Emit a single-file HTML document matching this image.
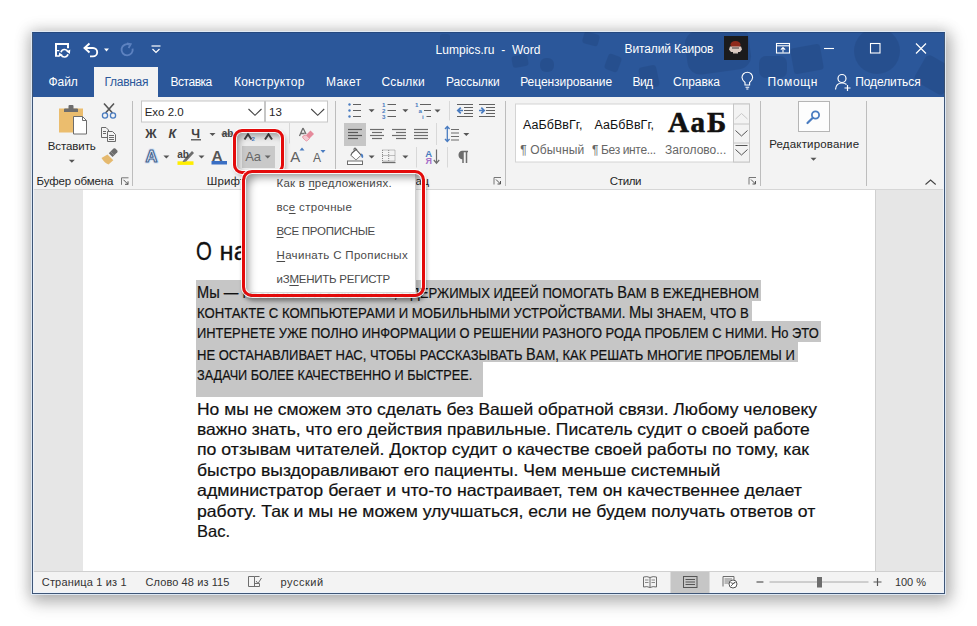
<!DOCTYPE html><html><head><meta charset="utf-8"><style>
*{margin:0;padding:0;box-sizing:border-box}
html,body{width:977px;height:626px;overflow:hidden;background:#fff;font-family:"Liberation Sans",sans-serif}
.t{position:absolute;white-space:pre}
.a{position:absolute}
svg.o{position:absolute;left:0;top:0;width:977px;height:626px;overflow:visible}
</style></head><body>
<div class="a" style="left:32px;top:32px;width:913px;height:562px;box-shadow:0 0 0 1px rgba(225,236,248,0.9),0 1px 14px 3px rgba(0,0,0,0.17),3px 6px 16px 3px rgba(0,0,0,0.22)"></div><div class="a" style="left:32px;top:32px;width:913px;height:562px;background:#2b579a;border:1px solid #3f5677;border-top-color:#24487f"></div><div class="a" style="left:32px;top:32px;width:913px;height:65px;overflow:hidden"><svg class="o" style="left:-32px;top:-32px" viewBox="0 0 977 626"><g fill="#000820" opacity="0.09"><circle cx="877" cy="51" r="23"/><rect x="686" y="28" width="64" height="44" rx="13" transform="rotate(-8 718 50)"/><rect x="759" y="56" width="28" height="22" rx="7"/><rect x="792" y="46" width="30" height="26" rx="3" transform="rotate(-10 807 59)"/><rect x="918" y="60" width="34" height="30" rx="5" transform="rotate(30 935 75)"/><rect x="583" y="33" width="16" height="12" rx="3" transform="rotate(15 591 39)"/><rect x="512" y="55" width="16" height="12" rx="3" transform="rotate(-10 520 61)"/><rect x="540" y="58" width="14" height="14" rx="6"/><rect x="606" y="55" width="14" height="16" rx="3" transform="rotate(20 613 63)"/><rect x="640" y="66" width="18" height="22" rx="4" transform="rotate(-12 649 77)"/><rect x="440" y="34" width="10" height="12" rx="3"/></g><path d="M56 56.8 V44 H68 V48.3" fill="none" stroke="#ffffff" stroke-width="2"/><path d="M57 50.6 H59.3 M57 56 H59" stroke="#ffffff" stroke-width="1.4"/><path d="M61 52.2 A3.7 3.7 0 0 1 67.9 51.6 M68 54.3 A3.7 3.7 0 0 1 61.1 54.9" fill="none" stroke="#ffffff" stroke-width="1.7"/><path d="M66.3 51.6 L70.3 49.6 L69.9 54 Z M62.7 54.9 L58.7 56.9 L59.1 52.5 Z" fill="#ffffff"/><path d="M86 48 H93 A4.2 4.2 0 0 1 93 56.4 H90" fill="none" stroke="#ffffff" stroke-width="1.9"/><path d="M89.5 43.5 L84.5 48 L89.5 52.5" fill="none" stroke="#ffffff" stroke-width="1.9"/><path d="M104 48.5 H109 L106.5 51.5 Z" fill="#ffffff"/><path d="M129.3 44.6 A5.6 5.6 0 1 0 132.6 48.6" fill="none" stroke="#5d82c0" stroke-width="1.9"/><path d="M126.8 43.3 L130.8 44.2 L128.6 48" fill="none" stroke="#5d82c0" stroke-width="1.7"/><path d="M151.5 46 H160.5" stroke="#ffffff" stroke-width="1.2"/><path d="M152.5 49 L156 52.5 L159.5 49" fill="none" stroke="#ffffff" stroke-width="1.2"/><rect x="724" y="36" width="24" height="24" fill="#1b1b1c"/><ellipse cx="735.5" cy="44.5" rx="5" ry="3.6" fill="#8f2a1c"/><path d="M730 46.5 H741 L742 49.5 L740 52 H731 L729 49.5 Z" fill="#dccbc2"/><path d="M732 48 H739" stroke="#5a5050" stroke-width="1.2"/><path d="M733 52 H738 V53.5 H733 Z" fill="#cfc2ba"/><g fill="none" stroke="#ffffff" stroke-width="1.1"><rect x="776.5" y="43.5" width="13" height="9.5"/><path d="M776.5 45.8 H789.5"/><path d="M783 52.5 V47.5 M780.8 49.7 L783 47.5 L785.2 49.7"/></g><path d="M824 48.5 H834" stroke="#ffffff" stroke-width="1.1"/><rect x="870.5" y="43.5" width="9.5" height="9.5" fill="none" stroke="#ffffff" stroke-width="1.1"/><path d="M916 43.5 L926 53.5 M926 43.5 L916 53.5" stroke="#ffffff" stroke-width="1.2"/><g fill="none" stroke="#ffffff" stroke-width="1.1"><path d="M745 85 V82.5 Q742 80 742 77.5 A5.3 5.3 0 0 1 752.6 77.5 Q752.6 80 749.6 82.5 V85 Z"/><path d="M745.5 87.2 H749.2 M746.3 89 H748.4"/></g><g fill="none" stroke="#ffffff" stroke-width="1.2"><circle cx="842" cy="78.5" r="4"/><path d="M835.5 89.5 Q836 83 842 83 Q845 83 846.5 84.5"/><path d="M847.5 85 V91 M844.5 88 H850.5"/></g></svg></div><div class="a" style="left:33px;top:97px;width:911px;height:93px;background:#f3f3f3;border-bottom:1px solid #d6d6d6"></div><div class="a" style="left:94px;top:67px;width:64px;height:31px;background:#f3f3f3;"></div><div class="a" style="left:33px;top:190px;width:911px;height:381px;background:#e6e6e6;"></div><div class="a" style="left:83px;top:190px;width:793px;height:381px;background:#fff;border-right:1px solid #d0d0d0"></div><div class="a" style="left:33px;top:571px;width:911px;height:22px;background:#f3f3f3;border-top:1px solid #d0d0d0"></div><div class="a" style="left:33px;top:97px;width:911px;height:496px;border:1px solid rgba(236,243,252,0.9);border-top:none"></div><svg class="o" viewBox="0 0 977 626"><rect x="59" y="108.5" width="24" height="24" fill="#ebbd6e"/><path d="M64 112 V109.5 Q64 108.5 65 108.5 H68.5 V106 Q68.5 105 69.5 105 H72.5 Q73.5 105 73.5 106 V108.5 H77 Q78 108.5 78 109.5 V112 Z" fill="#6d6d6d"/><path d="M73.5 116.5 H82.5 L86.5 120.5 V134 H73.5 Z" fill="#fff" stroke="#6d6d6d" stroke-width="1"/><path d="M82.5 116.5 V120.5 H86.5" fill="none" stroke="#6d6d6d" stroke-width="1"/><path d="M104 103.5 L112.5 113 M114 103.5 L105.5 113" stroke="#555" stroke-width="1.6"/><circle cx="105" cy="115.5" r="2.6" fill="none" stroke="#4a7cc0" stroke-width="1.3"/><circle cx="113" cy="115.5" r="2.6" fill="none" stroke="#4a7cc0" stroke-width="1.3"/><path d="M101.5 127.5 H106 L108.5 130 V137.5 H101.5 Z" fill="#f3f3f3" stroke="#6a6a6a" stroke-width="1"/><path d="M103 131.5 H106 M103 133.5 H106" stroke="#6a6a6a" stroke-width="1"/><path d="M107.5 131.5 H112.5 L115.5 134.5 V141.5 H107.5 Z" fill="#f3f3f3" stroke="#6a6a6a" stroke-width="1"/><path d="M109 135.5 H114 M109 137.5 H114 M109 139.5 H114" stroke="#6a6a6a" stroke-width="1"/><path d="M110.5 151.5 L113.5 148.5 Q114.5 147.8 115.3 148.6 L117.3 150.6 Q118 151.4 117.3 152.2 L114.3 155.2 Z" fill="#6d6d6d"/><path d="M108.8 153.2 L110.5 151.5 L114.3 155.2 L112.6 157 Z" fill="#6d6d6d"/><path d="M107.5 154.5 L113.3 160.3 L108.5 164.5 Q104.5 163 101.5 158 Z" fill="#e5b96e"/><path d="M132.5 101 V186" stroke="#bdbdbd" stroke-width="1"/><path d="M335.5 101 V186" stroke="#bdbdbd" stroke-width="1"/><path d="M505.5 101 V186" stroke="#bdbdbd" stroke-width="1"/><path d="M760.5 101 V186" stroke="#bdbdbd" stroke-width="1"/><path d="M866.5 101 V186" stroke="#bdbdbd" stroke-width="1"/><path d="M289.5 123 V143.5" stroke="#d8d8d8" stroke-width="1"/><path d="M416.5 147 V167.5" stroke="#d8d8d8" stroke-width="1"/><path d="M436.5 123 V145" stroke="#d8d8d8" stroke-width="1"/><path d="M447.5 147 V167.5" stroke="#d8d8d8" stroke-width="1"/><path d="M449.5 101 V120.5" stroke="#d8d8d8" stroke-width="1"/><rect x="141.5" y="101" width="123" height="21" fill="#fff" stroke="#c6c6c6"/><rect x="265.5" y="101" width="62" height="21" fill="#fff" stroke="#c6c6c6"/><path d="M248.5 109 L255 115.3 L261.5 109" fill="none" stroke="#444" stroke-width="1.1"/><path d="M311.2 109 L317.7 115.3 L324.2 109" fill="none" stroke="#444" stroke-width="1.1"/><path d="M68.8 159.8 H74.8 L71.8 162.8 Z" fill="#555"/><path d="M209.5 132.9 H215.5 L212.5 135.9 Z" fill="#555"/><path d="M163.4 155.5 H169.4 L166.4 158.5 Z" fill="#555"/><path d="M198.5 155.5 H204.5 L201.5 158.5 Z" fill="#555"/><path d="M368.6 109.3 H374.6 L371.6 112.3 Z" fill="#555"/><path d="M402.4 109.3 H408.4 L405.4 112.3 Z" fill="#555"/><path d="M434.5 109.5 H440.5 L437.5 112.5 Z" fill="#555"/><path d="M368.6 155.5 H374.6 L371.6 158.5 Z" fill="#555"/><path d="M402.4 155.5 H408.4 L405.4 158.5 Z" fill="#555"/><path d="M463.3 132.9 H469.3 L466.3 135.9 Z" fill="#555"/><path d="M810.5 157.7 H816.5 L813.5 160.7 Z" fill="#555"/><text x="145.6" y="162.4" font-size="16.5" font-weight="bold" font-family="Liberation Sans" fill="#e3edf9" stroke="#d3e2f4" stroke-width="3.2" stroke-linejoin="round">A</text><text x="145.6" y="162.4" font-size="16.5" font-weight="bold" font-family="Liberation Sans" fill="#e6f0fb" stroke="#46648f" stroke-width="1.1" stroke-linejoin="round">A</text><rect x="177.5" y="161.3" width="16" height="3.6" fill="#ffee00"/><path d="M184 159.5 L192 151 L194 153 L186 161.5 Z" fill="#6d6d6d"/><path d="M184 159.5 L186 161.5 L182.5 162 Z" fill="#6d6d6d"/><text x="211.8" y="160.8" font-size="15" font-weight="bold" font-family="Liberation Sans" fill="#555">A</text><rect x="211.5" y="161" width="15.5" height="3.5" fill="#3a6fc4"/><path d="M221.5 134 H233" stroke="#555" stroke-width="1"/><path d="M191 139.8 H201" stroke="#404040" stroke-width="1.2"/><path d="M303 128 L299.5 136 M303 128 L306 134 M300.8 133.5 H304.7" fill="none" stroke="#6d6d6d" stroke-width="1.3"/><path d="M306 135 L310.5 130.5 L314 134 L309.5 138.5 Z" fill="#e58a9b"/><path d="M306 135 L309.5 138.5 L307.5 140.5 Q306.5 141.5 305.5 140.5 L303 138 Q302 137 303 136 Z" fill="#f3c9d1" stroke="#e58a9b" stroke-width="0.8"/><text x="290.3" y="162.3" font-size="15" font-family="Liberation Sans" fill="#606060">A</text><path d="M299.5 150.5 L302 147.5 L304.5 150.5 Z" fill="#4a7cc0"/><text x="313" y="162.3" font-size="12" font-family="Liberation Sans" fill="#606060">A</text><path d="M320.5 150 L323 153 L325.5 150 Z" fill="#4a7cc0"/><circle cx="349.5" cy="104.5" r="1.2" fill="#4a7cc0"/><path d="M353 104.5 H361" stroke="#606060" stroke-width="1"/><circle cx="349.5" cy="110.5" r="1.2" fill="#4a7cc0"/><path d="M353 110.5 H361" stroke="#606060" stroke-width="1"/><circle cx="349.5" cy="116.5" r="1.2" fill="#4a7cc0"/><path d="M353 116.5 H361" stroke="#606060" stroke-width="1"/><path d="M387.5 104.5 H396" stroke="#606060" stroke-width="1"/><path d="M387.5 110.5 H396" stroke="#606060" stroke-width="1"/><path d="M387.5 116.5 H396" stroke="#606060" stroke-width="1"/><text x="382" y="107" font-size="6.2" fill="#4a7cc0" font-family="Liberation Sans" font-weight="bold">1</text><text x="382" y="113" font-size="6.2" fill="#4a7cc0" font-family="Liberation Sans" font-weight="bold">2</text><text x="382" y="119" font-size="6.2" fill="#4a7cc0" font-family="Liberation Sans" font-weight="bold">3</text><text x="415" y="107" font-size="6.2" fill="#4a7cc0" font-family="Liberation Sans" font-weight="bold">1</text><text x="418.5" y="113" font-size="6.2" fill="#4a7cc0" font-family="Liberation Sans" font-weight="bold">a</text><text x="422" y="119" font-size="6.2" fill="#4a7cc0" font-family="Liberation Sans" font-weight="bold">i</text><path d="M420 104.5 H431 M424 110.5 H431 M426.5 116.5 H431" stroke="#606060" stroke-width="1"/><path d="M457 104.5 H473 M464 107.5 H473 M464 110.5 H473 M464 113.5 H473 M457 116.5 H473" stroke="#606060" stroke-width="1"/><path d="M457.8 110.5 H463 M460.8 107.6 L457.8 110.5 L460.8 113.4" fill="none" stroke="#4a7cc0" stroke-width="1.7"/><path d="M479 104.5 H495 M486 107.5 H495 M486 110.5 H495 M486 113.5 H495 M479 116.5 H495" stroke="#606060" stroke-width="1"/><path d="M479 110.5 H484.2 M481.3 107.6 L484.2 110.5 L481.3 113.4" fill="none" stroke="#4a7cc0" stroke-width="1.7"/><rect x="344" y="123" width="22" height="23" fill="#c6c6c6"/><path d="M348 129.5 H362" stroke="#5a5a5a" stroke-width="1.2"/><path d="M348 132.5 H358" stroke="#5a5a5a" stroke-width="1.2"/><path d="M348 135.5 H362" stroke="#5a5a5a" stroke-width="1.2"/><path d="M348 138.5 H358" stroke="#5a5a5a" stroke-width="1.2"/><path d="M370 129.5 H384" stroke="#6d6d6d" stroke-width="1.2"/><path d="M372 132.5 H382" stroke="#6d6d6d" stroke-width="1.2"/><path d="M370 135.5 H384" stroke="#6d6d6d" stroke-width="1.2"/><path d="M372 138.5 H382" stroke="#6d6d6d" stroke-width="1.2"/><path d="M392 129.5 H406" stroke="#6d6d6d" stroke-width="1.2"/><path d="M396 132.5 H406" stroke="#6d6d6d" stroke-width="1.2"/><path d="M392 135.5 H406" stroke="#6d6d6d" stroke-width="1.2"/><path d="M396 138.5 H406" stroke="#6d6d6d" stroke-width="1.2"/><path d="M414 129.5 H428" stroke="#6d6d6d" stroke-width="1.2"/><path d="M414 132.5 H428" stroke="#6d6d6d" stroke-width="1.2"/><path d="M414 135.5 H428" stroke="#6d6d6d" stroke-width="1.2"/><path d="M414 138.5 H428" stroke="#6d6d6d" stroke-width="1.2"/><path d="M451 129.5 H459 M451 133 H459 M451 136.5 H459 M451 140 H459" stroke="#6d6d6d" stroke-width="1.2"/><path d="M447.3 127 V141 M445 129 L447.3 126.5 L449.6 129 M445 139 L447.3 141.5 L449.6 139" fill="none" stroke="#4a7cc0" stroke-width="1.3"/><path d="M352 153 L356 149.5 L361 155 L356 159.5 L351 155 Z" fill="#fff" stroke="#555" stroke-width="1.1"/><path d="M351 155 L356 159.5 L361 155 Z" fill="#fff"/><path d="M354 150.5 L354 148.5 Q355 147.5 356 148.5 L357 150" fill="none" stroke="#555" stroke-width="1"/><path d="M361 153.5 Q364 154 363 158 Q361 158 361 155 Z" fill="#4a7cc0"/><rect x="347.5" y="161" width="15" height="3.5" fill="#fff" stroke="#6d6d6d" stroke-width="1"/><g stroke="#888" stroke-width="1" stroke-dasharray="1 1" fill="none"><rect x="382.5" y="150" width="12.5" height="11"/><path d="M388.7 150 V161 M382.5 155.5 H395"/></g><path d="M382 162.5 H395.5" stroke="#6d6d6d" stroke-width="1.3"/><text x="425.3" y="156.5" font-size="9.5" fill="#4a7cc0" font-family="Liberation Sans" font-weight="bold">A</text><text x="425.6" y="164.3" font-size="9" fill="#a66ec8" font-family="Liberation Sans" font-weight="bold">Я</text><path d="M436.5 149.5 V163 M433.8 160 L436.5 163.2 L439.2 160" fill="none" stroke="#6d6d6d" stroke-width="1.2"/><path d="M463 151.5 V163 M466.5 151.5 V163 M468 151.5 H462 A3.6 3.6 0 0 0 462 158.5 H463" fill="none" stroke="#6d6d6d" stroke-width="1.5"/><path d="M462 151.5 A3.6 3.6 0 0 0 462 158.5 H463 V151.5 Z" fill="#6d6d6d"/><path d="M121.5 184.8 V177.8 H128.5" fill="none" stroke="#777" stroke-width="1"/><path d="M123.5 179.8 L128.0 184.3 M128.0 181.3 V184.3 H125.0" fill="none" stroke="#555" stroke-width="1"/><path d="M494 184.5 V177.5 H501" fill="none" stroke="#777" stroke-width="1"/><path d="M496 179.5 L500.5 184.0 M500.5 181.0 V184.0 H497.5" fill="none" stroke="#555" stroke-width="1"/><path d="M749 184.5 V177.5 H756" fill="none" stroke="#777" stroke-width="1"/><path d="M751 179.5 L755.5 184.0 M755.5 181.0 V184.0 H752.5" fill="none" stroke="#555" stroke-width="1"/><rect x="515.5" y="104" width="234" height="58" fill="#fff" stroke="#d4d4d4"/><rect x="733.5" y="104" width="16" height="58" fill="#f3f3f3" stroke="#c6c6c6"/><path d="M733.5 124 H749.5 M733.5 143 H749.5" stroke="#c6c6c6"/><path d="M735.5 119 L741.5 113.5 L747.5 119" fill="none" stroke="#c8c8c8" stroke-width="1"/><path d="M735.5 130.5 L741.5 136 L747.5 130.5" fill="none" stroke="#555" stroke-width="1"/><path d="M735.5 145.5 H747.5" stroke="#555" stroke-width="1"/><path d="M735.5 149.5 L741.5 155 L747.5 149.5" fill="none" stroke="#555" stroke-width="1"/><rect x="798.5" y="101.5" width="31" height="30" fill="#fdfdfd" stroke="#b5b5b5"/><circle cx="815.5" cy="115" r="3.6" fill="none" stroke="#4a7cc0" stroke-width="1.8"/><path d="M812.8 117.8 L807.5 123" stroke="#4a7cc0" stroke-width="2.2" stroke-linecap="round"/><path d="M925.5 184.5 L930.6 180 L935.7 184.5" fill="none" stroke="#444" stroke-width="1.1"/><path d="M248.5 576.5 V586.5 H254.5 M248.5 576.5 H254.5 V587 M254.5 576.5 H259.5" fill="none" stroke="#6d6d6d" stroke-width="1"/><path d="M256 581 L258 583.5 L261.5 578" fill="none" stroke="#6d6d6d" stroke-width="1"/><path d="M254.5 583.5 H259.5 V586.5 H254.5" fill="none" stroke="#6d6d6d" stroke-width="1"/><path d="M643.5 577 Q647 576 650 577.5 Q653 576 656.5 577 V587 Q653 586 650 587.5 Q647 586 643.5 587 Z M650 577.5 V587.5" fill="none" stroke="#6d6d6d" stroke-width="1"/><path d="M645 580 H648.5 M645 582.5 H648.5 M651.5 580 H655 M651.5 582.5 H655" stroke="#6d6d6d" stroke-width="0.8"/><rect x="670.5" y="572" width="39" height="21" fill="#c6c6c6"/><rect x="683.5" y="576.5" width="13.5" height="11" fill="none" stroke="#555" stroke-width="1"/><path d="M685.5 579.5 H695 M685.5 582 H695 M685.5 584.5 H695" stroke="#555" stroke-width="1"/><path d="M723 586.5 V576.5 H734 V580" fill="none" stroke="#6d6d6d" stroke-width="1"/><path d="M724.5 579 H732 M724.5 581 H730 M724.5 583 H729" stroke="#6d6d6d" stroke-width="0.9"/><circle cx="733" cy="584" r="4" fill="#fff" stroke="#555" stroke-width="1"/><path d="M730.5 582.5 Q733 584.5 735.5 582.5 M731 586 L735 582" stroke="#555" stroke-width="0.9" fill="none"/><path d="M756.5 582 H763.5" stroke="#555" stroke-width="1.2"/><path d="M769.5 582 H868.5" stroke="#a8a8a8" stroke-width="1"/><rect x="817" y="577" width="5" height="10.5" fill="#6d6d6d"/><path d="M873.5 582 H881.5 M877.5 578 V586" stroke="#555" stroke-width="1.2"/></svg><div class="t" id="title" style="left:435.60px;top:44.00px;font-size:12px;line-height:12px;color:#ffffff;letter-spacing:0.018px;">Lumpics.ru  -  Word</div>
<div class="t" id="user" style="left:624.50px;top:43.00px;font-size:12px;line-height:12px;color:#ffffff;letter-spacing:-0.122px;">Виталий Каиров</div>
<div class="t" id="tb1" style="left:48.60px;top:76.00px;font-size:12px;line-height:12px;color:#ffffff;letter-spacing:-0.105px;">Файл</div>
<div class="t" id="tb2" style="left:104.50px;top:76.00px;font-size:12px;line-height:12px;color:#2b579a;letter-spacing:-0.281px;">Главная</div>
<div class="t" id="tb3" style="left:170.50px;top:76.00px;font-size:12px;line-height:12px;color:#ffffff;letter-spacing:-0.469px;">Вставка</div>
<div class="t" id="tb4" style="left:234.00px;top:76.00px;font-size:12px;line-height:12px;color:#ffffff;letter-spacing:0.197px;">Конструктор</div>
<div class="t" id="tb5" style="left:326.10px;top:76.00px;font-size:12px;line-height:12px;color:#ffffff;letter-spacing:0.207px;">Макет</div>
<div class="t" id="tb6" style="left:381.40px;top:76.00px;font-size:12px;line-height:12px;color:#ffffff;letter-spacing:0.229px;">Ссылки</div>
<div class="t" id="tb7" style="left:445.90px;top:76.00px;font-size:12px;line-height:12px;color:#ffffff;letter-spacing:-0.010px;">Рассылки</div>
<div class="t" id="tb8" style="left:520.20px;top:76.00px;font-size:12px;line-height:12px;color:#ffffff;letter-spacing:-0.059px;">Рецензирование</div>
<div class="t" id="tb9" style="left:632.40px;top:76.00px;font-size:12px;line-height:12px;color:#ffffff;letter-spacing:-0.512px;">Вид</div>
<div class="t" id="tb10" style="left:673.00px;top:76.00px;font-size:12px;line-height:12px;color:#ffffff;letter-spacing:-0.013px;">Справка</div>
<div class="t" id="tb11" style="left:767.40px;top:76.00px;font-size:12px;line-height:12px;color:#ffffff;letter-spacing:0.673px;">Помощн</div>
<div class="t" id="tb12" style="left:855.20px;top:76.00px;font-size:12px;line-height:12px;color:#ffffff;letter-spacing:-0.085px;">Поделиться</div>
<div class="t" id="vst" style="left:47.80px;top:141.00px;font-size:11.5px;line-height:11.5px;color:#262626;letter-spacing:-0.107px;">Вставить</div>
<div class="t" id="buf" style="left:36.60px;top:176.00px;font-size:11.5px;line-height:11.5px;color:#262626;letter-spacing:-0.123px;">Буфер обмена</div>
<div class="t" id="shr" style="left:206.80px;top:176.00px;font-size:11.5px;line-height:11.5px;color:#262626;letter-spacing:0.089px;">Шрифт</div>
<div class="t" id="abz" style="left:395.00px;top:176.00px;font-size:11.5px;line-height:11.5px;color:#262626;letter-spacing:0.432px;">Абзац</div>
<div class="t" id="stl" style="left:609.80px;top:176.00px;font-size:11.5px;line-height:11.5px;color:#262626;letter-spacing:-0.360px;">Стили</div>
<div class="t" id="red" style="left:769.20px;top:139.00px;font-size:11.5px;line-height:11.5px;color:#262626;letter-spacing:0.176px;">Редактирование</div>
<div class="t" id="fnt" style="left:144.70px;top:107.00px;font-size:11.5px;line-height:11.5px;color:#262626;">Exo 2.0</div>
<div class="t" id="fsz" style="left:269.00px;top:107.00px;font-size:11.5px;line-height:11.5px;color:#262626;">13</div>
<div class="t" id="bld" style="left:145.20px;top:128.00px;font-size:12.5px;line-height:12.5px;color:#404040;font-weight:bold;letter-spacing:1.796px;">Ж</div>
<div class="t" id="itl" style="left:168.50px;top:128.00px;font-size:12.5px;line-height:12.5px;color:#404040;font-weight:bold;font-style:italic;">К</div>
<div class="t" id="und" style="left:191.20px;top:128.00px;font-size:12.5px;line-height:12.5px;color:#404040;font-weight:bold;">Ч</div>
<div class="t" id="stk" style="left:221.80px;top:129.13px;font-size:10px;line-height:10px;color:#444;font-weight:bold;">ab</div>
<div class="t" id="aab" style="left:177.20px;top:149.53px;font-size:10px;line-height:10px;color:#444;font-weight:bold;">ab</div>
<div class="t" id="st1" style="left:522.90px;top:119.00px;font-size:12.5px;line-height:12.5px;color:#111;letter-spacing:0.056px;">АаБбВвГг,</div>
<div class="t" id="st2" style="left:594.50px;top:119.00px;font-size:12.5px;line-height:12.5px;color:#111;letter-spacing:0.056px;">АаБбВвГг,</div>
<div class="t" id="st3" style="left:668.00px;top:108.00px;font-size:29px;line-height:29px;color:#111;font-weight:bold;font-family:'Liberation Serif',serif;letter-spacing:2.028px;-webkit-text-stroke:0.6px #111;">АаБ</div>
<div class="t" id="sn1" style="left:520.30px;top:144.00px;font-size:12px;line-height:12px;color:#666;letter-spacing:0.134px;">¶ Обычный</div>
<div class="t" id="sn2" style="left:592.00px;top:144.00px;font-size:12px;line-height:12px;color:#666;letter-spacing:-0.357px;">¶ Без инте...</div>
<div class="t" id="sn3" style="left:665.00px;top:144.00px;font-size:12px;line-height:12px;color:#666;letter-spacing:0.011px;">Заголово...</div>
<div class="t" id="s1" style="left:41.80px;top:577.00px;font-size:11px;line-height:11px;color:#333;letter-spacing:0.168px;">Страница 1 из 1</div>
<div class="t" id="s2" style="left:145.50px;top:577.00px;font-size:11px;line-height:11px;color:#333;letter-spacing:0.095px;">Слово 48 из 115</div>
<div class="t" id="s3" style="left:280.60px;top:577.00px;font-size:11px;line-height:11px;color:#333;letter-spacing:0.502px;">русский</div>
<div class="t" id="s4" style="left:894.90px;top:577.00px;font-size:11px;line-height:11px;color:#333;letter-spacing:-0.023px;">100 %</div>
<div class="a" style="left:196px;top:280px;width:565px;height:20.5px;background:#c6c6c6"></div><div class="a" style="left:196px;top:300.5px;width:556px;height:20.5px;background:#c6c6c6"></div><div class="a" style="left:196px;top:321px;width:625px;height:20.5px;background:#c6c6c6"></div><div class="a" style="left:196px;top:341.5px;width:602px;height:20.5px;background:#c6c6c6"></div><div class="a" style="left:196px;top:362px;width:287px;height:34.5px;background:#c6c6c6"></div><div class="t" id="h1" style="left:196.30px;top:239.00px;font-size:25.5px;line-height:25.5px;color:#111;transform:scaleX(0.8);transform-origin:0 0;-webkit-text-stroke:0.3px #111;">О</div>
<div class="t" id="h1b" style="left:219.60px;top:239.00px;font-size:25.5px;line-height:25.5px;color:#111;-webkit-text-stroke:0.3px #111;">нас</div>
<div class="t" id="p1a" style="left:197.00px;top:286.00px;font-size:14.8px;line-height:14.8px;color:#111;-webkit-text-stroke:0.2px #111;transform:scaleX(0.8860);transform-origin:0 0;"><span style="font-size:16.5px;line-height:0">Мы — </span>ГРУППА ЭНТУЗИАСТОВ, ОДЕРЖИМЫХ ИДЕЕЙ ПОМОГАТЬ <span style="font-size:16.5px;line-height:0">В</span>АМ В ЕЖЕДНЕВНОМ</div>
<div class="t" id="p1b" style="left:197.00px;top:306.00px;font-size:14.8px;line-height:14.8px;color:#111;-webkit-text-stroke:0.2px #111;transform:scaleX(0.8888);transform-origin:0 0;">КОНТАКТЕ С КОМПЬЮТЕРАМИ И МОБИЛЬНЫМИ УСТРОЙСТВАМИ. <span style="font-size:16.5px;line-height:0">М</span>Ы ЗНАЕМ, ЧТО В</div>
<div class="t" id="p1c" style="left:197.00px;top:326.00px;font-size:14.8px;line-height:14.8px;color:#111;-webkit-text-stroke:0.2px #111;transform:scaleX(0.8724);transform-origin:0 0;">ИНТЕРНЕТЕ УЖЕ ПОЛНО ИНФОРМАЦИИ О РЕШЕНИИ РАЗНОГО РОДА ПРОБЛЕМ С НИМИ. <span style="font-size:16.5px;line-height:0">Н</span>о ЭТО</div>
<div class="t" id="p1d" style="left:197.00px;top:348.00px;font-size:14.8px;line-height:14.8px;color:#111;-webkit-text-stroke:0.2px #111;transform:scaleX(0.8786);transform-origin:0 0;">НЕ ОСТАНАВЛИВАЕТ НАС, ЧТОБЫ РАССКАЗЫВАТЬ <span style="font-size:16.5px;line-height:0">В</span>АМ, КАК РЕШАТЬ МНОГИЕ ПРОБЛЕМЫ И</div>
<div class="t" id="p1e" style="left:197.00px;top:368.00px;font-size:14.8px;line-height:14.8px;color:#111;-webkit-text-stroke:0.2px #111;transform:scaleX(0.8582);transform-origin:0 0;">ЗАДАЧИ БОЛЕЕ КАЧЕСТВЕННО И БЫСТРЕЕ.</div>
<div class="t" id="p2a" style="left:197.00px;top:401.00px;font-size:16.5px;line-height:16.5px;color:#111;-webkit-text-stroke:0.2px #111;transform:scaleX(1.0573);transform-origin:0 0;">Но мы не сможем это сделать без Вашей обратной связи. Любому человеку</div>
<div class="t" id="p2b" style="left:197.00px;top:421.00px;font-size:16.5px;line-height:16.5px;color:#111;-webkit-text-stroke:0.2px #111;transform:scaleX(1.0588);transform-origin:0 0;">важно знать, что его действия правильные. Писатель судит о своей работе</div>
<div class="t" id="p2c" style="left:197.00px;top:441.00px;font-size:16.5px;line-height:16.5px;color:#111;-webkit-text-stroke:0.2px #111;transform:scaleX(1.0724);transform-origin:0 0;">по отзывам читателей. Доктор судит о качестве своей работы по тому, как</div>
<div class="t" id="p2d" style="left:197.00px;top:462.00px;font-size:16.5px;line-height:16.5px;color:#111;-webkit-text-stroke:0.2px #111;transform:scaleX(1.0645);transform-origin:0 0;">быстро выздоравливают его пациенты. Чем меньше системный</div>
<div class="t" id="p2e" style="left:197.00px;top:482.00px;font-size:16.5px;line-height:16.5px;color:#111;-webkit-text-stroke:0.2px #111;transform:scaleX(1.0766);transform-origin:0 0;">администратор бегает и что-то настраивает, тем он качественнее делает</div>
<div class="t" id="p2f" style="left:197.00px;top:503.00px;font-size:16.5px;line-height:16.5px;color:#111;-webkit-text-stroke:0.2px #111;transform:scaleX(1.0675);transform-origin:0 0;">работу. Так и мы не можем улучшаться, если не будем получать ответов от</div>
<div class="t" id="p2g" style="left:197.00px;top:523.00px;font-size:16.5px;line-height:16.5px;color:#111;-webkit-text-stroke:0.2px #111;transform:scaleX(0.9990);transform-origin:0 0;">Вас.</div>
<div class="a" style="left:236px;top:131px;width:45px;height:40px;background:#ececec"></div><svg class="o" viewBox="0 0 977 626"><path d="M244.5 139.5 L248 134.3 L251.5 139.5" fill="none" stroke="#444" stroke-width="2"/><text x="251.5" y="141" font-size="6" fill="#4a7cc0" font-family="Liberation Sans" font-weight="bold">2</text><path d="M265 139.5 L268.5 134.3 L272 139.5" fill="none" stroke="#444" stroke-width="2"/><rect x="242" y="146" width="33" height="22" fill="#c9c9c9"/><path d="M264.7 155.5 H270.7 L267.7 158.5 Z" fill="#666"/></svg><div class="t" id="aa" style="left:245.20px;top:150.00px;font-size:13px;line-height:13px;color:#666;">Aa</div>
<div class="a" style="left:233px;top:128.5px;width:51px;height:45px;border:3px solid #e30b0b;border-radius:9px;box-shadow:0 0 0 1px rgba(255,255,255,0.85),inset 0 0 0 1px rgba(255,255,255,0.85),inset 4px 5px 6px -1px rgba(0,0,0,0.33),2px 3px 4px rgba(0,0,0,0.25)"></div><div class="a" style="left:245px;top:172px;width:171px;height:121px;background:#fff;border-right:1px solid #cfcfcf;border-bottom:1px solid #d8d8d8;box-shadow:3px 2px 4px rgba(0,0,0,0.18)"></div><div class="t" id="m1" style="left:276.50px;top:178.00px;font-size:11.5px;line-height:11.5px;color:#4a4a4a;letter-spacing:0.213px;">Как в <span style="text-decoration:underline;text-underline-offset:1.5px">п</span>редложениях.</div>
<div class="t" id="m2" style="left:276.50px;top:202.00px;font-size:11.5px;line-height:11.5px;color:#4a4a4a;letter-spacing:0.308px;">вс<span style="text-decoration:underline;text-underline-offset:1.5px">е</span> строчные</div>
<div class="t" id="m3" style="left:276.50px;top:226.00px;font-size:11.5px;line-height:11.5px;color:#4a4a4a;letter-spacing:-0.274px;"><span style="text-decoration:underline;text-underline-offset:1.5px">В</span>СЕ ПРОПИСНЫЕ</div>
<div class="t" id="m4" style="left:276.50px;top:250.00px;font-size:11.5px;line-height:11.5px;color:#4a4a4a;letter-spacing:0.319px;"><span style="text-decoration:underline;text-underline-offset:1.5px">Н</span>ачинать С Прописных</div>
<div class="t" id="m5" style="left:276.50px;top:274.00px;font-size:11.5px;line-height:11.5px;color:#4a4a4a;letter-spacing:-0.242px;">иЗ<span style="text-decoration:underline;text-underline-offset:1.5px">М</span>ЕНИТЬ РЕГИСТР</div>
<div class="a" style="left:242px;top:170px;width:183px;height:127px;border:3px solid #e30b0b;border-radius:10px;box-shadow:0 0 0 1px rgba(255,255,255,0.9),inset 0 0 0 1px rgba(255,255,255,0.9),inset 6px 7px 8px -3px rgba(0,0,0,0.42),1px 4px 4px 0 rgba(0,0,0,0.42)"></div></body></html>
